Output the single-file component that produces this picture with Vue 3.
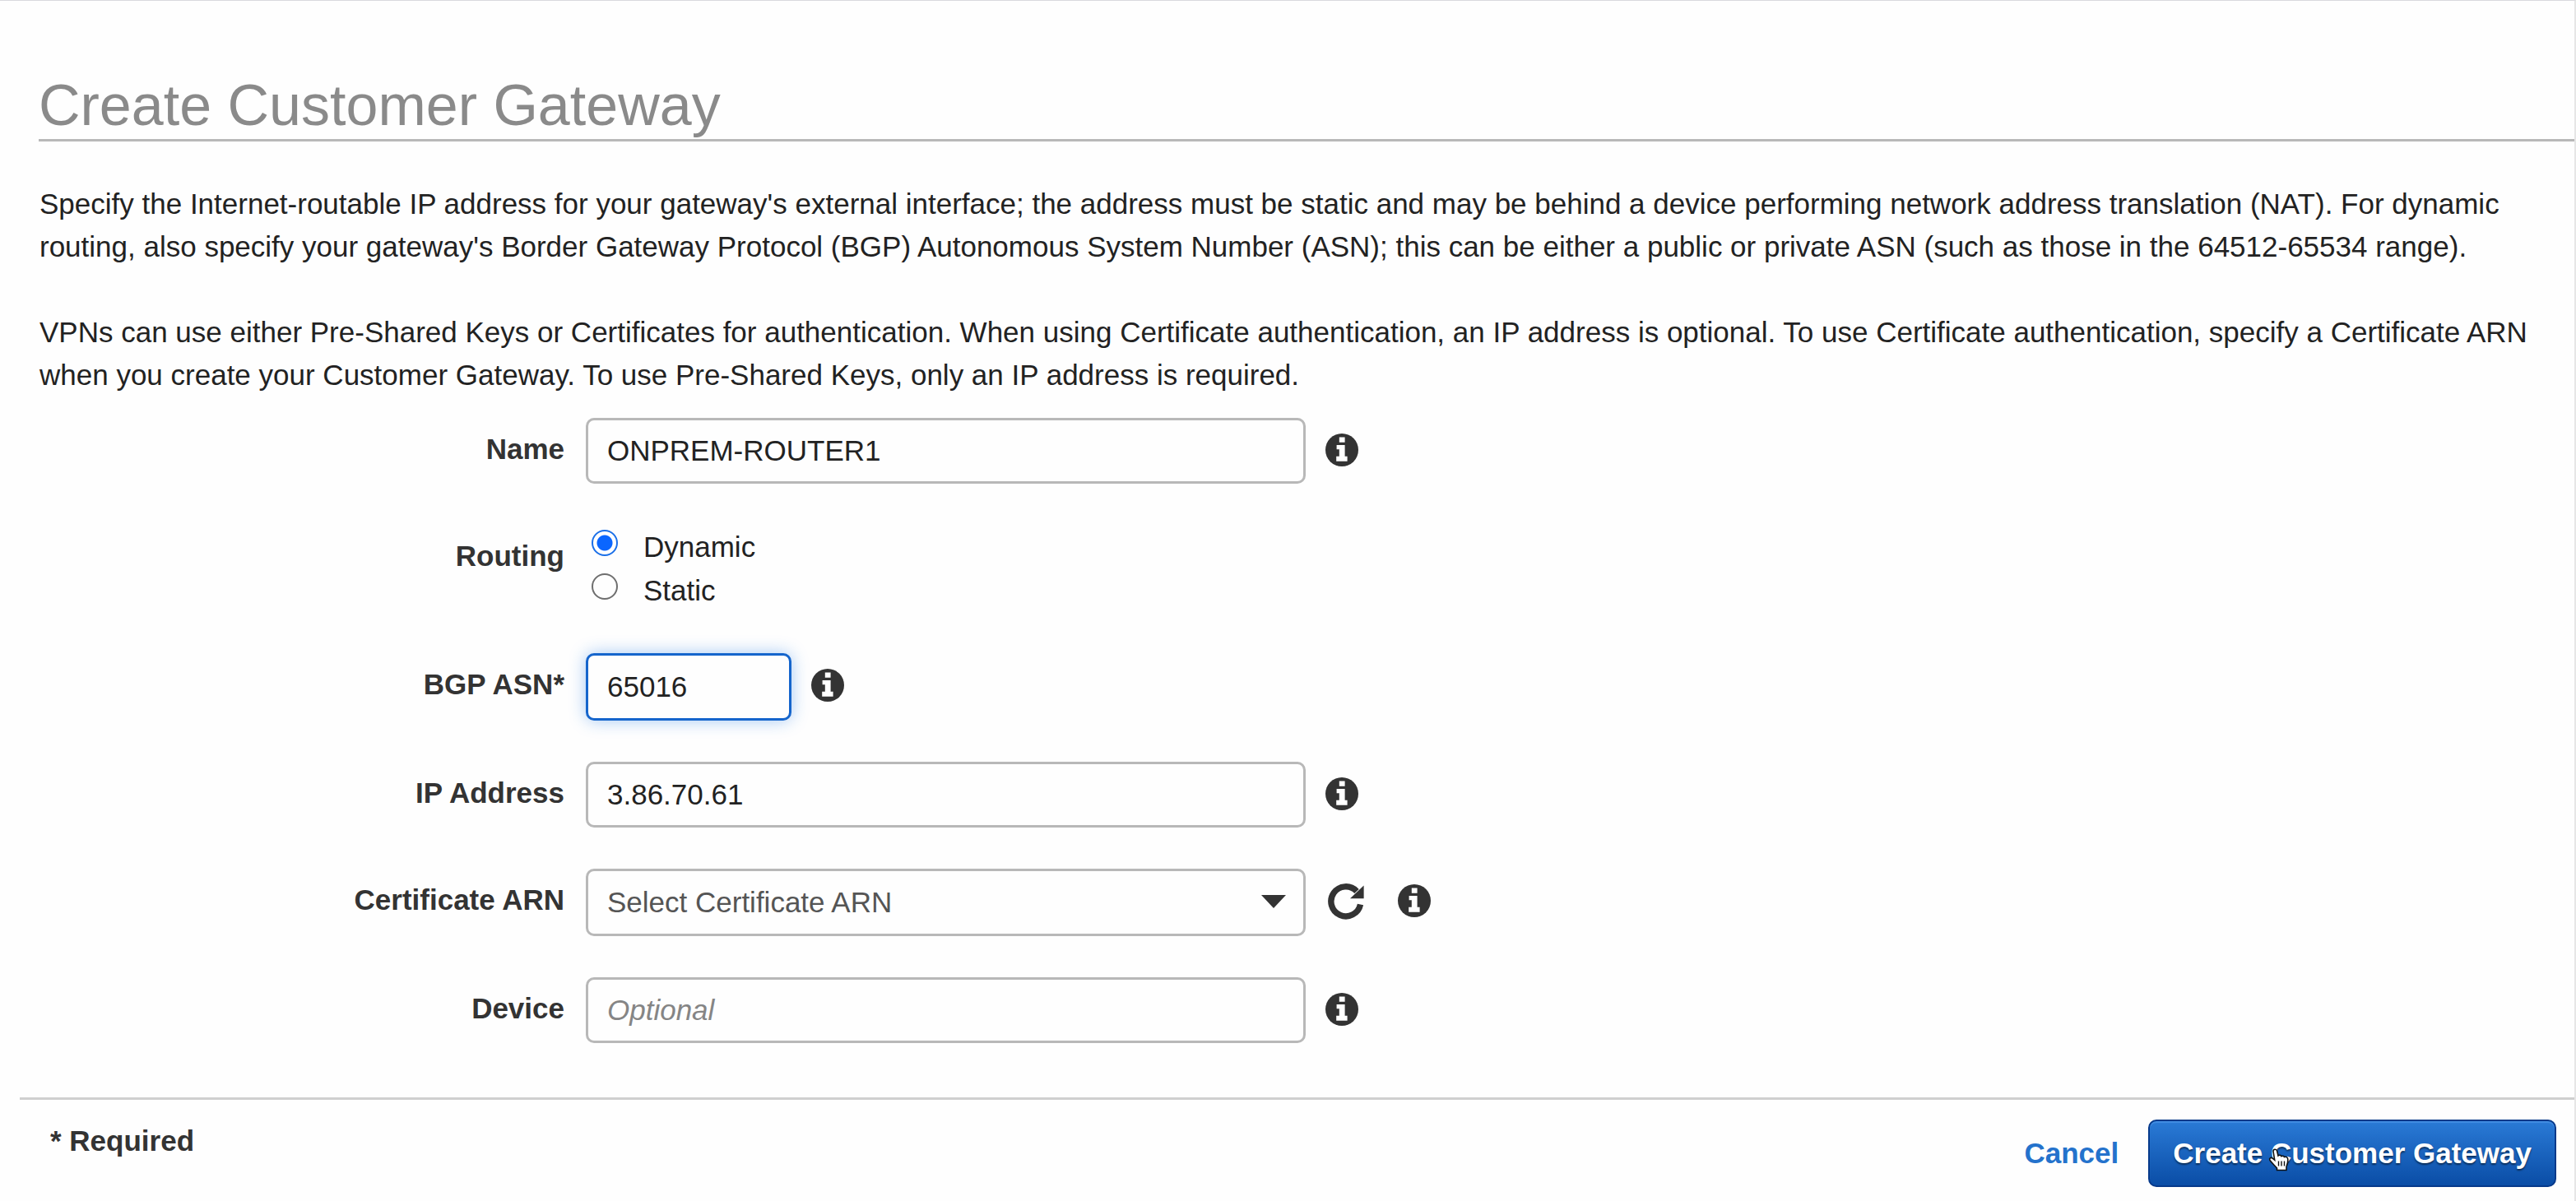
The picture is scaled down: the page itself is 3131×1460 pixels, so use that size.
<script setup>
import { ref, h } from 'vue'

const name = ref('ONPREM-ROUTER1')
const routing = ref('dynamic')
const asn = ref('65016')
const ip = ref('3.86.70.61')
const certificate = ref('')
const device = ref('')

const InfoIcon = () =>
  h('svg', { viewBox: '0 0 40 40', width: 40, height: 40, 'aria-hidden': 'true' }, [
    h('circle', { cx: 20, cy: 20, r: 20, fill: '#333' }),
    h('path', {
      fill: '#fff',
      d: 'M16.8 4.6h6.8v6.2h-6.8z M13.6 14h10v13.8h3v6H13.2v-6h3.6v-8.6h-3.2z'
    })
  ])
</script>

<template>
  <main class="page">
    <header class="heading">
      <h1>Create Customer Gateway</h1>
    </header>

    <section class="intro">
      <p>
        Specify the Internet-routable IP address for your gateway's external interface; the address must be static and may be behind a device performing network address translation (NAT). For dynamic routing, also specify your gateway's Border Gateway Protocol (BGP) Autonomous System Number (ASN); this can be either a public or private ASN (such as those in the 64512-65534 range).
      </p>
      <p>
        VPNs can use either Pre-Shared Keys or Certificates for authentication. When using Certificate authentication, an IP address is optional. To use Certificate authentication, specify a Certificate ARN when you create your Customer Gateway. To use Pre-Shared Keys, only an IP address is required.
      </p>
    </section>

    <form id="gateway" class="form" @submit.prevent>
      <div class="row">
        <label class="label" for="name">Name</label>
        <input id="name" v-model="name" class="field" type="text" />
        <button type="button" class="icon" aria-label="About name"><InfoIcon /></button>
      </div>

      <div class="row" role="radiogroup" aria-labelledby="routing-label">
        <span id="routing-label" class="label">Routing</span>
        <div class="options">
          <label class="option">
            <input v-model="routing" type="radio" name="routing" value="dynamic" />
            <span>Dynamic</span>
          </label>
          <label class="option">
            <input v-model="routing" type="radio" name="routing" value="static" />
            <span>Static</span>
          </label>
        </div>
      </div>

      <div class="row">
        <label class="label" for="asn">BGP ASN*</label>
        <input id="asn" v-model="asn" class="field short active" type="text" required />
        <button type="button" class="icon" aria-label="About BGP ASN"><InfoIcon /></button>
      </div>

      <div class="row">
        <label class="label" for="ip">IP Address</label>
        <input id="ip" v-model="ip" class="field" type="text" />
        <button type="button" class="icon" aria-label="About IP address"><InfoIcon /></button>
      </div>

      <div class="row">
        <label class="label" for="certificate">Certificate ARN</label>
        <div class="select">
          <select id="certificate" v-model="certificate" class="field tall">
            <option value="">Select Certificate ARN</option>
          </select>
          <svg class="caret" viewBox="0 0 30 16" width="30" height="16" aria-hidden="true">
            <path d="M0 0h30L15 16z" fill="#333" />
          </svg>
        </div>
        <button type="button" class="icon refresh" aria-label="Refresh certificates">
          <svg viewBox="0 0 44 44" width="44" height="44" aria-hidden="true">
            <path d="M39.5 25.5A18 18 0 1 1 35 9.5" fill="none" stroke="#333" stroke-width="7.4" />
            <path d="M27 18.2h16.6V2.4z" fill="#333" />
          </svg>
        </button>
        <button type="button" class="icon" aria-label="About certificate ARN"><InfoIcon /></button>
      </div>

      <div class="row">
        <label class="label" for="device">Device</label>
        <input id="device" v-model="device" class="field" type="text" placeholder="Optional" />
        <button type="button" class="icon" aria-label="About device"><InfoIcon /></button>
      </div>
    </form>

    <footer class="footer">
      <strong class="required">* Required</strong>
      <div class="actions">
        <a href="#" class="cancel">Cancel</a>
        <button type="submit" form="gateway" class="submit">
          Create Customer Gateway
          <svg class="pointer" viewBox="0 0 26 28" width="26" height="28" aria-hidden="true">
            <path
              d="M6 3.5C6 .5 10 .5 10.6 3.2L12 9c1.5-1.2 3.2-.8 3.8.6 1.4-.8 3-.4 3.6.9 2-.8 4.2.3 4.4 2.8.3 4-.6 6.3-1.8 9.2V26.5H10.5V24C8 21 4 17.5 2 14.5c-1.3-2.3 1-4 3-2.5l2.7 2.3z"
              fill="#fff"
              stroke="#111"
              stroke-width="1.6"
            />
            <path d="M12.5 15.5v6M16 15.5v6M19.5 15.5v6" stroke="#111" stroke-width="1.4" />
          </svg>
        </button>
      </div>
    </footer>
  </main>
</template>

<style>
body {
  background: #fefefe;
}
</style>

<style scoped>
.page {
  box-sizing: border-box;
  min-height: 100vh;
  padding-top: 87px;
  border-top: 1px solid #d9d9de;
  border-right: 2px solid #e6e6e6;
  font: 35px/52px 'Liberation Sans', Arial, sans-serif;
  color: #222;
}

.heading {
  margin-left: 47px;
  border-bottom: 3px solid #b8b8b8;
}

h1 {
  margin: 0;
  font-size: 70px;
  line-height: 81px;
  font-weight: 400;
  color: #8a8a8a;
}

.intro {
  display: flex;
  flex-direction: column;
  gap: 52px;
  padding: 50px 28px 26px 48px;
}

p {
  margin: 0;
}

.form {
  display: flex;
  flex-direction: column;
  gap: 50px;
}

.row {
  display: flex;
  align-items: flex-start;
}

.label {
  width: 686px;
  margin-right: 26px;
  line-height: 76px;
  font-weight: 700;
  text-align: right;
  color: #333;
}

.field {
  box-sizing: border-box;
  width: 875px;
  height: 80px;
  padding: 0 23px;
  border: 3px solid #b8b8b8;
  border-radius: 10px;
  background: #fefefe;
  font: inherit;
  color: #222;
  outline: none;
}

.field::placeholder {
  font-style: italic;
  color: #858585;
  opacity: 1;
}

.short {
  width: 250px;
}

.active {
  height: 82px;
  border-color: #1565cc;
  box-shadow: 0 0 20px rgba(30, 120, 230, 0.4);
}

.select {
  position: relative;
  display: flex;
}

.tall {
  height: 82px;
  appearance: none;
  color: #555;
}

.caret {
  position: absolute;
  top: 32px;
  right: 24px;
}

.icon {
  display: flex;
  margin: 19px 0 0 24px;
  padding: 0;
  border: 0;
  background: none;
}

.refresh {
  margin: 18px 17px 0 27px;
}

.option {
  display: flex;
  align-items: flex-start;
  gap: 31px;
  line-height: 53px;
}

.option input {
  appearance: none;
  box-sizing: border-box;
  width: 32px;
  height: 32px;
  margin: 6px 0 0 7px;
  border: 2px solid #6e6e6e;
  border-radius: 50%;
}

.option input:checked {
  border-color: #1a6fe8;
  background: radial-gradient(circle, #0a66ff 9px, #fff 10px);
}

.footer {
  display: flex;
  justify-content: space-between;
  align-items: flex-start;
  margin: 66px 0 0 24px;
  padding: 24px 22px 17px 37px;
  border-top: 3px solid #cfcfcf;
}

.required {
  color: #333;
}

.actions {
  display: flex;
  align-items: center;
  gap: 36px;
}

.cancel {
  font-weight: 700;
  color: #2472cc;
  text-decoration: none;
}

.submit {
  position: relative;
  height: 82px;
  padding: 0 28px;
  border: 2px solid #06398a;
  border-radius: 10px;
  background: linear-gradient(#2a7ad6, #0a4da6);
  box-shadow: inset 0 2px 1px rgba(90, 160, 240, 0.5);
  font: inherit;
  font-weight: 700;
  color: #fff;
  text-shadow: 0 2px 2px rgba(0, 0, 0, 0.5);
}

.pointer {
  position: absolute;
  top: 33px;
  left: 144px;
}
</style>
